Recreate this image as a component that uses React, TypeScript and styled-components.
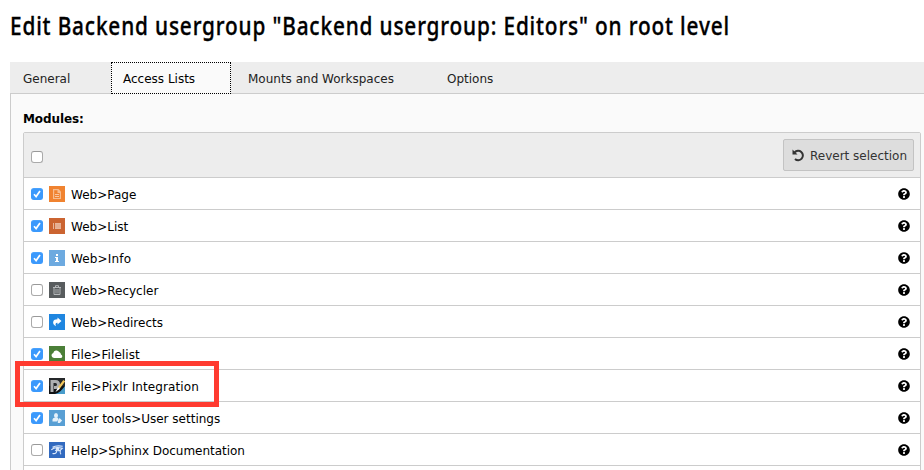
import React from "react";
import styled, { createGlobalStyle } from "styled-components";
import { FaQuestionCircle } from "react-icons/fa";

const GlobalStyle = createGlobalStyle`
  * { box-sizing: border-box; }
  html, body { margin: 0; background: #fff; overflow: hidden; }
  body { font: 12px/18px "DejaVu Sans", Verdana, sans-serif; color: #000; }
`;

const Page = styled.main`
  width: 924px;
  height: 470px;
  padding: 0 0 0 10px;
  overflow: hidden;
`;

const Title = styled.h1`
  margin: 0;
  height: 62px;
  padding-top: 6px;
  font: 500 26px/39px "Noto Sans", sans-serif;
  letter-spacing: 1.05px;
  white-space: nowrap;
  width: max-content;
  -webkit-text-stroke: 0.35px #000;
  transform: scaleX(0.8);
  transform-origin: 0 0;
`;

const Tabs = styled.nav`
  display: flex;
  height: 32px;
  background: #ededed;
  border-bottom: 1px solid #ccc;
`;

const Tab = styled.button<{ $width: number; $inset?: number; $active?: boolean }>`
  width: ${(p) => p.$width}px;
  height: ${(p) => (p.$active ? 32 : 31)}px;
  padding: ${(p) => (p.$active ? 1 : 2)}px 0 0 ${(p) => p.$inset ?? 13}px;
  border: 0;
  outline: ${(p) => (p.$active ? "1px dotted #000" : "none")};
  outline-offset: -1px;
  background: ${(p) => (p.$active ? "#fafafa" : "transparent")};
  color: ${(p) => (p.$active ? "#000" : "#222")};
  font: inherit;
  text-align: left;
  white-space: nowrap;
`;

const Label = styled.span<{ $spacing?: number }>`
  letter-spacing: ${(p) => p.$spacing ?? 0}px;
  white-space: nowrap;
`;

const RowLabel = styled(Label)`
  padding-top: 2px;
`;

const Panel = styled.section`
  height: 376px;
  padding: 16px 3px 0 12px;
  background: #fafafa;
  border-left: 1px solid #ccc;
`;

const Heading = styled.h2`
  margin: 0;
  height: 22px;
  font: bold 12px/18px "DejaVu Sans", Verdana, sans-serif;
  letter-spacing: -0.1px;
`;

const Table = styled.div`
  border: 1px solid #ccc;
  border-radius: 2px 2px 0 0;
  background: #fff;
`;

const TableHead = styled.div`
  display: flex;
  align-items: center;
  height: 45px;
  padding: 0 6px 0 7px;
  background: #ededed;
  border-bottom: 1px solid #ccc;
`;

const RevertButton = styled.button`
  display: flex;
  align-items: center;
  gap: 5px;
  width: 131px;
  height: 32px;
  margin-left: auto;
  padding: 0 0 0 8px;
  background: #ddd;
  border: 1px solid #c3c3c3;
  border-radius: 2px;
  color: #333;
  font: inherit;
`;

const Row = styled.label`
  display: flex;
  align-items: center;
  height: 32px;
  padding: 1px 10px 0 7px;
  border-bottom: 1px solid #ccc;
`;

const Check = styled.span<{ $on?: boolean; $low?: boolean }>`
  display: flex;
  width: 12px;
  height: 12px;
  margin-top: ${(p) => (p.$low ? 4 : 0)}px;
  border: 1px solid ${(p) => (p.$on ? "#3b99fc" : "#aaa")};
  border-top-color: ${(p) => (p.$on ? "#4aa2fd" : "#999")};
  border-radius: 3px;
  background: ${(p) => (p.$on ? "#3b99fc" : "#fff")};
`;

const Icon = styled.svg`
  width: 16px;
  height: 16px;
  margin: 0 6px;
  flex: none;
`;

const Help = styled(FaQuestionCircle)`
  width: 12px;
  height: 12px;
  margin-left: auto;
`;

const Highlight = styled.div`
  position: absolute;
  left: 15px;
  top: 361px;
  width: 204px;
  height: 46px;
  border: 5px solid #ff3b30;
`;

function CheckBox({ on, low }: { on?: boolean; low?: boolean }) {
  return (
    <Check $on={on} $low={low}>
      {on && (
        <svg width="10" height="10" viewBox="0 0 10 10">
          <path d="M2 5.3 4.1 7.6 8 2" fill="none" stroke="#fff" strokeWidth="1.7" />
        </svg>
      )}
    </Check>
  );
}

const glyphs: Record<string, [string, React.ReactNode]> = {
  page: ["#f08330", <g><path fill="#f8bd8e" d="M4 3h5.5L12 5.5V13H4z" /><path d="M5.2 4.2h3.3V7h2.3v4.900H5.200z" fill="#f08330" /><path d="M6 8.500h4M6 10.500h4" fill="none" stroke="#f9c7a0" /></g>],
  list: ["#cb6431", <g fill="#e8b59a"><path d="M4 5h1v6H4zM6 5h6v6H6z" /><path d="M6 7h6M6 9h6" stroke="#dc9573" strokeWidth=".4" /></g>],
  info: ["#6daae0", <path fill="#fff" d="M7 4h2v2H7zM6 7h3v4h1v1H6v-1h1V8H6z" />],
  recycler: ["#585c5e", <g fill="none" stroke="#b4b7b9"><path d="M4 5.500h8M6.500 5V3.700h3V5M5 6v6.500h6V6" /><path d="M7 7v4.500M9 7v4.500" strokeWidth=".9" /></g>],
  redirects: ["#1f86e0", <path fill="#fff" d="M8.500 3.500 12.500 7l-4 3.500V8.800C6.600 8.700 6 10 7 12.200 4.700 11.200 3.800 9.300 4.200 7.700 4.700 6 6.200 5.300 8.500 5.300z" />],
  filelist: ["#4b7f38", <path fill="#fff" d="M5 12a2.500 2.500 0 0 1-.7-4.900A3.200 3.200 0 0 1 10.200 6a2.700 2.700 0 0 1 1.800 2.400A1.900 1.900 0 0 1 12 12z" />],
  pixlr: ["#25282a", <g><path d="M0 8h16v8H0z" fill="#101214" /><path d="M3 14V3.500h3.500c4 0 4 6 0 6H5" fill="none" stroke="#aeb0b2" strokeWidth="3" /><path d="M16 8v8H6c4-1 7-4 10-8z" fill="#489ccb" /><path d="M15.200 2.700 9.800 10" stroke="#f2c75c" strokeWidth="2.200" /><path d="m9 9.200 2 1.500L6.500 14z" fill="#fff" /></g>],
  user: ["#589fd4", <g fill="#e5f1fa"><ellipse cx="7" cy="5.400" rx="2" ry="2.500" /><path d="M3.500 11.500V9.700c0-1.300 1-2 2.200-2h2.900l1.200 1.500-2 2.300z" /><path d="m10.500 8 2.600 2.600-2.200 2.400H8.800v-2z" /></g>],
  sphinx: ["#326abf", <g fill="none" stroke="#dce9fb" strokeWidth="1.1"><path d="M3.500 5.300C6 3.700 10 3.600 13.700 4.200M2.300 7.800C4.500 5.500 9 5.300 13.500 6.300c-1.500 2.300-4.500 2.800-7.500 2M7.500 9c.3 2-1.500 3.200-4 2.400M11.300 8.500c-.3 1.700-.3 3 .8 3.700" /><circle cx="8.500" cy="6.900" r="1.100" fill="#dce9fb" /></g>],
};

const modules: { text: string; icon: string; on?: boolean; spacing?: number }[] = [
  { text: "Web>Page", icon: "page", on: true },
  { text: "Web>List", icon: "list", on: true },
  { text: "Web>Info", icon: "info", on: true, spacing: 0.15 },
  { text: "Web>Recycler", icon: "recycler" },
  { text: "Web>Redirects", icon: "redirects" },
  { text: "File>Filelist", icon: "filelist", on: true, spacing: 0.07 },
  { text: "File>Pixlr Integration", icon: "pixlr", on: true, spacing: 0.1 },
  { text: "User tools>User settings", icon: "user", on: true },
  { text: "Help>Sphinx Documentation", icon: "sphinx", spacing: -0.03 },
];

function ModuleRow({ text, icon, on, spacing }: (typeof modules)[number]) {
  const [color, glyph] = glyphs[icon];
  return (
    <Row>
      <CheckBox on={on} />
      <Icon viewBox="0 0 16 16">
        <rect width="16" height="16" fill={color} />
        {glyph}
      </Icon>
      <RowLabel $spacing={spacing}>{text}</RowLabel>
      <Help />
    </Row>
  );
}

export default function App() {
  return (
    <Page>
      <GlobalStyle />
      <Title>Edit Backend usergroup "Backend usergroup: Editors" on root level</Title>
      <Tabs>
        <Tab $width={101}><Label>General</Label></Tab>
        <Tab $width={120} $inset={12} $active><Label>Access Lists</Label></Tab>
        <Tab $width={203} $inset={17}><Label>Mounts and Workspaces</Label></Tab>
        <Tab $width={100}><Label>Options</Label></Tab>
      </Tabs>
      <Panel>
        <Heading>Modules:</Heading>
        <Table>
          <TableHead>
            <CheckBox low />
            <RevertButton>
              <svg width="13" height="13" viewBox="0 0 13 13">
                <path d="M2.6 3.4A4.7 4.7 0 1 1 3 9.9" fill="none" stroke="#333" strokeWidth="2" />
                <path d="M.5.5v5h5z" fill="#333" />
              </svg>
              <RowLabel>Revert selection</RowLabel>
            </RevertButton>
          </TableHead>
          {modules.map((m) => <ModuleRow key={m.text} {...m} />)}
          <Row />
        </Table>
      </Panel>
      <Highlight />
    </Page>
  );
}
